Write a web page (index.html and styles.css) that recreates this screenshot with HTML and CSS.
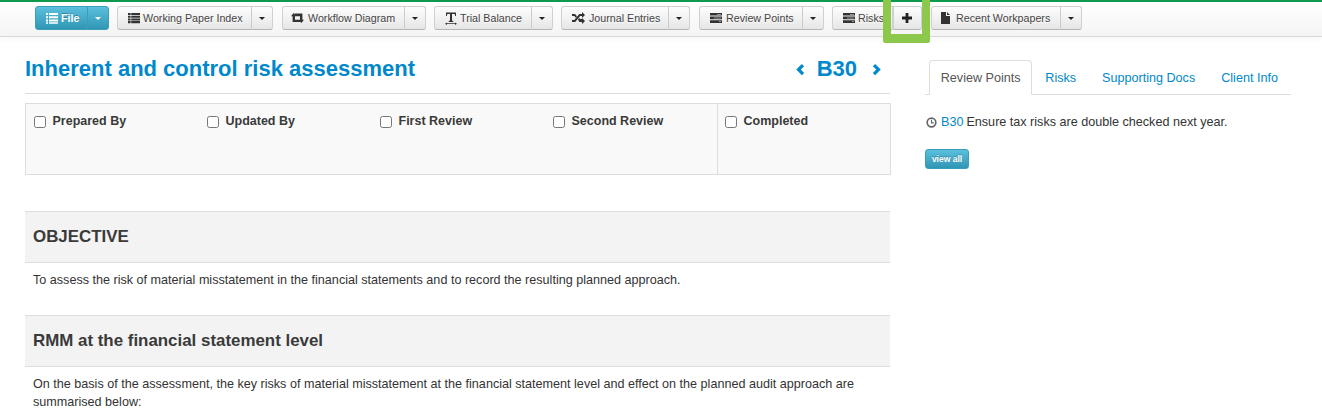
FILE: index.html
```html
<!DOCTYPE html>
<html lang="en">
<head>
<meta charset="utf-8">
<title>Inherent and control risk assessment</title>
<link rel="stylesheet" href="styles.css">
</head>
<body>
<header class="toolbar">
  <div class="group g-file">
    <button class="btn btn-info main"><svg class="ico" viewBox="0 0 12 12"><path fill="currentColor" d="M0 1h2v2H0zM3 1h9v2H3zM0 4.300h2v2H0zM3 4.300h9v2H3zM0 7.600h2v2H0zM3 7.600h9v2H3zM0 10.200h2v1.600H0zM3 10.200h9v1.600H3z"/></svg>File</button>
    <button class="btn btn-info caret-btn"><span class="caret"></span></button>
  </div>
  <div class="group g-index">
    <button class="btn main"><svg class="ico" viewBox="0 0 12 12"><path fill="currentColor" d="M0 1h2.600v2.100H0zM3.200 1H12v2.100H3.200zM0 3.700h2.600v2.100H0zM3.200 3.700H12v2.100H3.200zM0 6.400h2.600v2.100H0zM3.200 6.400H12v2.100H3.200zM0 9.100h2.600v2.100H0zM3.200 9.100H12v2.100H3.200z"/></svg>Working Paper Index</button>
    <button class="btn caret-btn"><span class="caret"></span></button>
  </div>
  <div class="group g-flow">
    <button class="btn main"><svg class="ico ico-w" viewBox="0 0 13 12"><path fill="currentColor" d="M2.600 1 5.400 4.200H4V7.700H8l1.700 2.300H1.600V4.200H0zM3.400 1.500h8v6.300H13L10.400 11 7.600 7.800H9V4.200H5.200z"/></svg>Workflow Diagram</button>
    <button class="btn caret-btn"><span class="caret"></span></button>
  </div>
  <div class="group g-trial">
    <button class="btn main"><svg class="ico ico-t" viewBox="0 0 12 13"><path fill="currentColor" d="M1 .5h10V4h-.8L9.700 2H7v6.400l1.200.5V10H3.800v-1.100L5 8.400V2H2.300L1.800 4H1zM0 11.700 2 10.500v.8h8v-.8l2 1.200-2 1.200v-.8H2v.8z"/></svg>Trial Balance</button>
    <button class="btn caret-btn"><span class="caret"></span></button>
  </div>
  <div class="group g-journal">
    <button class="btn main"><svg class="ico ico-w" viewBox="0 0 13 12"><path fill="currentColor" d="M0 2h3l2 2.300-1.200 1.500L2.300 4H0zM0 8h2.300l5-6H10V0l3 3-3 3V4H8.200l-5 6H0zM6 7.500 7.200 6l1 1H10V6l3 3-3 3v-2H7.300z"/></svg>Journal Entries</button>
    <button class="btn caret-btn"><span class="caret"></span></button>
  </div>
  <div class="group g-review">
    <button class="btn main"><svg class="ico ico-r" viewBox="0 0 12 12"><path fill="currentColor" d="M0 1h12v2.600H0zM0 4.600h12v2.700H0zM0 8.300h12v2.700H0z"/><path fill="#eee" d="M7 2h4v.6H7zM4 5.700h7v.5H4zM9 9.400h2v.5H9z"/></svg>Review Points</button>
    <button class="btn caret-btn"><span class="caret"></span></button>
  </div>
  <div class="group g-risks">
    <button class="btn main"><svg class="ico" viewBox="0 0 12 12"><path fill="currentColor" d="M0 1h12v2.600H0zM0 4.600h12v2.700H0zM0 8.300h12v2.700H0z"/><path fill="#eee" d="M7 2h4v.6H7zM4 5.700h7v.5H4zM9 9.400h2v.5H9z"/></svg>Risks</button>
    <button class="btn plus-btn"><svg class="plus" viewBox="0 0 10 10"><path fill="currentColor" d="M3.600 0h2.800v3.600H10v2.800H6.400V10H3.600V6.400H0V3.600h3.600z"/></svg></button>
  </div>
  <div class="group g-recent">
    <button class="btn main"><svg class="ico ico-f" viewBox="0 0 9 12"><path fill="currentColor" d="M0 0h5v4h4v8H0zM6 0l3 3H6z"/></svg>Recent Workpapers</button>
    <button class="btn caret-btn"><span class="caret"></span></button>
  </div>
  <div class="highlight"></div>
</header>

<div class="page">
  <main class="content">
    <div class="title-row">
      <h1>Inherent and control risk assessment</h1>
      <div class="pager">
        <svg class="chev prev" viewBox="0 0 8 12"><path fill="currentColor" d="M5.500 1.500 7.300 3.300 4.600 6l2.700 2.700-1.800 1.800L1 6z"/></svg>
        <span class="ref">B30</span>
        <svg class="chev" viewBox="0 0 8 12"><path fill="currentColor" d="M2.500 1.500.7 3.300 3.400 6 .7 8.700l1.800 1.800L7 6z"/></svg>
      </div>
    </div>

    <div class="signoff">
      <div class="signoff-main">
        <label class="check"><input type="checkbox">Prepared By</label>
        <label class="check"><input type="checkbox">Updated By</label>
        <label class="check"><input type="checkbox">First Review</label>
        <label class="check"><input type="checkbox">Second Review</label>
      </div>
      <div class="signoff-end">
        <label class="check"><input type="checkbox">Completed</label>
      </div>
    </div>

    <section class="section first">
      <h2>OBJECTIVE</h2>
      <p>To assess the risk of material misstatement in the financial statements and to record the resulting planned approach.</p>
    </section>
    <section class="section">
      <h2>RMM at the financial statement level</h2>
      <p>On the basis of the assessment, the key risks of material misstatement at the financial statement level and effect on the planned audit approach are summarised below:</p>
    </section>
  </main>

  <aside class="side">
    <nav class="tabs">
      <a class="tab active">Review Points</a>
      <a class="tab">Risks</a>
      <a class="tab">Supporting Docs</a>
      <a class="tab">Client Info</a>
    </nav>
    <p class="point"><svg class="clock" viewBox="0 0 12 12"><circle cx="6" cy="6" r="4.700" fill="none" stroke="currentColor" stroke-width="1.800"/><path fill="none" stroke="currentColor" stroke-width="1.200" d="M6 3v3.400h2.500"/></svg><a class="ref-link">B30</a><span>Ensure tax risks are double checked next year.</span></p>
    <button class="btn btn-info view-all">view all</button>
  </aside>
</div>
</body>
</html>
```

FILE: styles.css
```css
* { box-sizing: border-box; }
html, body { margin: 0; padding: 0; }
body {
  width: 1322px;
  height: 418px;
  overflow: hidden;
  background: #fff;
  color: #333;
  font-family: "Liberation Sans", Arial, sans-serif;
  font-size: 12.600px;
}

/* toolbar */
.toolbar {
  position: relative;
  display: flex;
  align-items: flex-start;
  gap: 8px;
  height: 37px;
  padding: 4px 0 0 35px;
  border-top: 2px solid #0e9a4d;
  border-bottom: 1px solid #d9d9d9;
  background: linear-gradient(#fff, #f4f4f4);
  box-shadow: 0 2px 6px rgba(0,0,0,.04);
}
.group { display: flex; height: 24px; }
.g-file .main { width: 53px; }
.g-index .main { width: 135px; }
.g-flow { margin-left: 1px; }
.g-flow .main { width: 123px; padding-left: 8px; }
.g-trial .main { width: 98px; }
.g-journal .main { width: 108px; }
.g-review { margin-left: 1px; }
.g-review .main { width: 104px; }
.g-risks .main { width: 61px; overflow: hidden; }
.g-recent { margin-left: 1px; }
.g-recent .main { width: 130px; padding-left: 9px; }

.btn {
  display: flex;
  align-items: center;
  justify-content: center;
  margin: 0;
  border: 1px solid #d0d0d0;
  border-bottom-color: #b5b5b5;
  background: linear-gradient(#fdfdfd, #e6e6e6);
  color: #444;
  font-family: inherit;
  font-size: 10.700px;
  white-space: nowrap;
  text-shadow: 0 1px 1px rgba(255,255,255,.75);
  padding: 0;
}
.main {
  justify-content: flex-start;
  border-radius: 3px 0 0 3px;
  padding: 0 0 0 10px;
  gap: 3px;
}
.caret-btn { width: 22px; border-left: 1px solid #ccc; margin-left: -1px; border-radius: 0 3px 3px 0; }
.caret { width: 0; height: 0; border: 3px solid transparent; border-top: 3px solid #222; border-bottom: 0; }
.btn-info {
  border-color: #3c9cbc;
  background: linear-gradient(#5bc0de, #2f96b4);
  color: #fff;
  font-weight: bold;
  text-shadow: 0 -1px 0 rgba(0,0,0,.25);
}
.btn-info .caret { border-top-color: #fff; }
.ico { width: 12px; height: 12px; color: #333; flex: none; }
.btn-info .ico { color: #fff; }
.ico-w { width: 13px; margin-right: 1px; }
.ico-t { height: 13px; }
.ico-r { margin-right: 1px; }
.ico-f { width: 9px; margin-right: 3px; }
.plus-btn { width: 29px; padding-right: 2px; border-radius: 0 3px 3px 0; }
.plus { width: 10px; height: 10px; color: #222; }
.highlight {
  position: absolute;
  left: 883px;
  top: -2px;
  width: 47px;
  height: 43px;
  border: solid #8bc84b;
  border-width: 0 8px 9px 8px;
  border-radius: 0 0 3px 3px;
}

/* layout */
.page {
  display: flex;
  padding-left: 25px;
}
.content { width: 865px; flex: none; }
.side { width: 366px; margin-left: 35px; padding-top: 23px; }

.title-row {
  display: flex;
  justify-content: space-between;
  align-items: center;
  height: 57px;
  padding: 8px 8px 0 0;
  border-bottom: 1px solid #ddd;
}
h1 {
  margin: 0;
  font-size: 22px;
  font-weight: bold;
  color: #0088cc;
}
.pager { display: flex; align-items: center; gap: 15px; color: #0088cc; }
.chev { width: 10px; height: 15px; }
.chev.prev { margin-right: -3px; }
.ref { font-size: 22px; font-weight: bold; }

.signoff {
  display: flex;
  height: 72px;
  margin: 9px -1px 0 0;
  border: 1px solid #ddd;
  background: #f9f9f9;
}
.signoff-main {
  display: grid;
  grid-template-columns: repeat(4, 173px);
  width: 692px;
  padding: 9px 0 0 8px;
  border-right: 1px solid #ddd;
}
.signoff-end { padding: 9px 0 0 7px; }
.check {
  display: flex;
  align-items: flex-start;
  height: 16px;
  line-height: 16px;
  font-size: 12.500px;
  font-weight: bold;
  color: #3a3a3a;
}
.check input { width: 12px; height: 12px; margin: 3px 6.500px 0 0; flex: none; }

.section.first { margin-top: 36px; }
h2 {
  display: flex;
  align-items: center;
  height: 52px;
  margin: 0;
  padding-left: 8px;
  border-top: 1px solid #ddd;
  border-bottom: 1px solid #ddd;
  background: #f3f3f3;
  font-size: 16.900px;
  font-weight: bold;
  color: #3a3a3a;
}
.section p {
  margin: 0;
  padding: 8px 8px 26px;
  line-height: 18px;
  font-size: 12.600px;
}
.section:last-child p { padding-bottom: 0; }

/* side */
.tabs {
  display: flex;
  height: 35px;
  padding-left: 4px;
  border-bottom: 1px solid #ddd;
}
.tab {
  display: block;
  height: 35px;
  padding: 0 12px;
  line-height: 34px;
  border: 1px solid transparent;
  font-size: 12.600px;
  white-space: nowrap;
  color: #0088cc;
}
.tab.active {
  padding: 0 10.750px;
  color: #555;
  background: #fff;
  border-color: #ddd;
  border-bottom-color: #fff;
  border-radius: 4px 4px 0 0;
}
.point {
  display: flex;
  align-items: center;
  gap: 4px;
  margin: 0;
  padding: 18px 0 0 1px;
  line-height: 18px;
  white-space: nowrap;
}
.clock { width: 11px; height: 11px; color: #666; flex: none; }
.ref-link { color: #0088cc; margin-right: -1px; }
.view-all {
  width: 44px;
  height: 20px;
  margin-top: 18px;
  border-radius: 3px;
  font-size: 8.500px;
}
```
